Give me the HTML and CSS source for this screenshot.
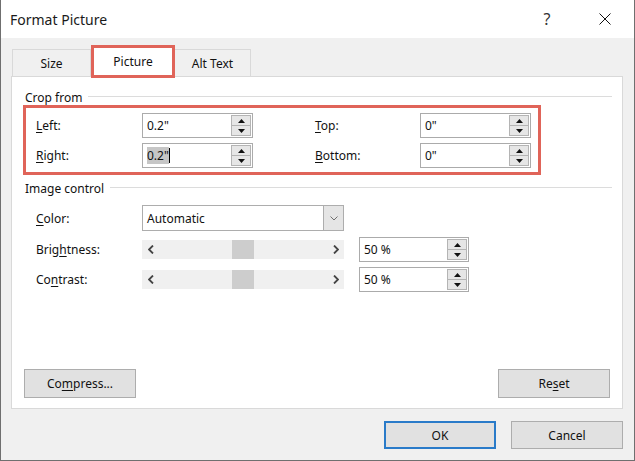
FILE: index.html
```html
<!DOCTYPE html>
<html>
<head>
<meta charset="utf-8">
<title>Format Picture</title>
<link rel="stylesheet" href="styles.css">
</head>
<body>
<div class="window">
  <div class="titlebar">
    <div class="title">Format Picture</div>
    <div class="tb-btn help">?</div>
    <div class="tb-btn close">
      <svg width="12" height="12" viewBox="0 0 12 12"><path d="M0.5 0.5L11.5 11.5M11.5 0.5L0.5 11.5" stroke="#111" stroke-width="1" fill="none"/></svg>
    </div>
  </div>
  <div class="body">
    <div class="tabs">
      <div class="tab tab-size">Size</div>
      <div class="tab tab-active">Picture</div>
      <div class="tab tab-alt">Alt Text</div>
    </div>
    <div class="panel">
      <div class="group-title"><span>Crop from</span><i class="rule"></i></div>
      <div class="crop-box">
        <div class="lbl"><u>L</u>eft:</div>
        <div class="spin"><span class="val">0.2"</span><div class="spin-btns"><div class="sb"><svg width="7" height="4" viewBox="0 0 7 4"><polygon points="0,4 3.5,0 7,4" fill="#111"/></svg></div><div class="sb"><svg width="7" height="4" viewBox="0 0 7 4"><polygon points="0,0 7,0 3.5,4" fill="#111"/></svg></div></div></div>
        <div></div>
        <div class="lbl"><u>T</u>op:</div>
        <div class="spin"><span class="val">0"</span><div class="spin-btns"><div class="sb"><svg width="7" height="4" viewBox="0 0 7 4"><polygon points="0,4 3.5,0 7,4" fill="#111"/></svg></div><div class="sb"><svg width="7" height="4" viewBox="0 0 7 4"><polygon points="0,0 7,0 3.5,4" fill="#111"/></svg></div></div></div>
        <div class="lbl"><u>R</u>ight:</div>
        <div class="spin"><span class="val"><span class="sel">0.2"</span><span class="caret"></span></span><div class="spin-btns"><div class="sb"><svg width="7" height="4" viewBox="0 0 7 4"><polygon points="0,4 3.5,0 7,4" fill="#111"/></svg></div><div class="sb"><svg width="7" height="4" viewBox="0 0 7 4"><polygon points="0,0 7,0 3.5,4" fill="#111"/></svg></div></div></div>
        <div></div>
        <div class="lbl"><u>B</u>ottom:</div>
        <div class="spin"><span class="val">0"</span><div class="spin-btns"><div class="sb"><svg width="7" height="4" viewBox="0 0 7 4"><polygon points="0,4 3.5,0 7,4" fill="#111"/></svg></div><div class="sb"><svg width="7" height="4" viewBox="0 0 7 4"><polygon points="0,0 7,0 3.5,4" fill="#111"/></svg></div></div></div>
      </div>
      <div class="group-title group-image"><span>Image control</span><i class="rule"></i></div>
      <div class="row row-color">
        <div class="lbl lbl-wide"><u>C</u>olor:</div>
        <div class="dropdown"><span class="val">Automatic</span><div class="dd-btn"><svg width="8" height="5" viewBox="0 0 8 5"><polyline points="0.5,0.5 4,4 7.5,0.5" stroke="#707070" stroke-width="1" fill="none"/></svg></div></div>
      </div>
      <div class="row row-bright">
        <div class="lbl lbl-wide">Brig<u>h</u>tness:</div>
        <div class="scroll">
          <div class="sc-arrow"><svg width="6" height="9" viewBox="0 0 6 9"><polyline points="5,0.5 1,4.5 5,8.5" stroke="#444" stroke-width="1.8" fill="none"/></svg></div>
          <div class="sc-track"><div class="sc-thumb"></div></div>
          <div class="sc-arrow"><svg width="6" height="9" viewBox="0 0 6 9"><polyline points="1,0.5 5,4.5 1,8.5" stroke="#444" stroke-width="1.8" fill="none"/></svg></div>
        </div>
        <div class="spin spin-pct"><span class="val">50 %</span><div class="spin-btns"><div class="sb"><svg width="7" height="4" viewBox="0 0 7 4"><polygon points="0,4 3.5,0 7,4" fill="#111"/></svg></div><div class="sb"><svg width="7" height="4" viewBox="0 0 7 4"><polygon points="0,0 7,0 3.5,4" fill="#111"/></svg></div></div></div>
      </div>
      <div class="row row-contrast">
        <div class="lbl lbl-wide">Co<u>n</u>trast:</div>
        <div class="scroll">
          <div class="sc-arrow"><svg width="6" height="9" viewBox="0 0 6 9"><polyline points="5,0.5 1,4.5 5,8.5" stroke="#444" stroke-width="1.8" fill="none"/></svg></div>
          <div class="sc-track"><div class="sc-thumb"></div></div>
          <div class="sc-arrow"><svg width="6" height="9" viewBox="0 0 6 9"><polyline points="1,0.5 5,4.5 1,8.5" stroke="#444" stroke-width="1.8" fill="none"/></svg></div>
        </div>
        <div class="spin spin-pct"><span class="val">50 %</span><div class="spin-btns"><div class="sb"><svg width="7" height="4" viewBox="0 0 7 4"><polygon points="0,4 3.5,0 7,4" fill="#111"/></svg></div><div class="sb"><svg width="7" height="4" viewBox="0 0 7 4"><polygon points="0,0 7,0 3.5,4" fill="#111"/></svg></div></div></div>
      </div>
      <div class="panel-buttons">
        <div class="btn">Co<u>m</u>press...</div>
        <div class="btn">Re<u>s</u>et</div>
      </div>
    </div>
    <div class="footer">
      <div class="btn btn-ok">OK</div>
      <div class="btn">Cancel</div>
    </div>
  </div>
</div>
</body>
</html>
```
FILE: styles.css
```css
* { box-sizing: border-box; margin: 0; padding: 0; }
html, body { width: 635px; height: 461px; overflow: hidden; }
body {
  font-family: "Noto Sans", "Open Sans", sans-serif;
  font-size: 12px;
  color: #111;
  background: #f0f0f0;
}
u { text-decoration: underline; text-underline-offset: 2px; }

.window {
  width: 635px;
  height: 461px;
  display: flex;
  flex-direction: column;
  background: #f0f0f0;
  border-left: 1px solid #6f6f6f;
  border-right: 1px solid #6f6f6f;
  border-bottom: 1px solid #6f6f6f;
}

.titlebar {
  height: 38px;
  flex: none;
  background: #fff;
  display: flex;
  align-items: center;
  padding: 0 6px 0 9px;
}
.title { flex: 1; font-size: 14px; color: #1a1a1a; }
.tb-btn {
  width: 46px;
  height: 38px;
  display: flex;
  align-items: center;
  justify-content: center;
}
.help { margin-right: 12px; font-size: 16px; color: #333; }

.body {
  flex: 1;
  display: flex;
  flex-direction: column;
  padding: 7px 11px 0 10px;
}

.tabs {
  display: flex;
  align-items: flex-end;
  height: 31px;
  padding-left: 1px;
}
.tab {
  height: 27px;
  border: 1px solid #d9d9d9;
  border-bottom: 0;
  background: #f0f0f0;
  display: flex;
  align-items: center;
  justify-content: center;
}
.tab-size { width: 79px; }
.tab-active {
  width: 84px;
  height: 33px;
  border: 3px solid #e06459;
  background: #fff;
  margin-bottom: -2px;
  position: relative;
  z-index: 1;
  padding-bottom: 1px;
}
.tab-alt { width: 76px; border-left: 0; }

.panel {
  height: 333px;
  flex: none;
  background: #fff;
  border: 1px solid #d9d9d9;
  display: flex;
  flex-direction: column;
  padding: 12px 10px 10px 11px;
}

.group-title {
  height: 16px;
  display: flex;
  align-items: center;
  padding-left: 2px;
}
.rule { flex: 1; height: 1px; background: #dcdcdc; margin-left: 6px; margin-top: -1px; }
.group-image { margin-top: 5px; }

.crop-box {
  width: 518px;
  border: 3px solid #e06459;
  padding: 5px 0 4px 10px;
  display: grid;
  grid-template-columns: 106px 111px 62px 105px 111px;
  grid-auto-rows: 25px;
  row-gap: 5px;
  align-items: center;
}

.spin {
  width: 111px;
  height: 25px;
  border: 1px solid #ababab;
  background: #fff;
  display: flex;
  align-items: center;
}
.val { flex: 1; padding-left: 4px; white-space: nowrap; display: flex; align-items: center; }
.sel { background: #c6c6c6; }
.caret { display: inline-block; width: 1px; height: 15px; background: #000; }
.spin-btns {
  align-self: stretch;
  width: 21px;
  padding: 1px 1px 1px 0;
  display: flex;
  flex-direction: column;
}
.sb {
  flex: 1;
  border: 1px solid #b4b4b4;
  background: #e6e6e6;
  display: flex;
  align-items: center;
  justify-content: center;
}
.sb + .sb { border-top: 0; }

.row { display: flex; align-items: center; padding-left: 13px; }
.lbl-wide { width: 106px; flex: none; }
.row-color { height: 26px; margin-top: 9px; }
.row-bright { height: 25px; margin-top: 6px; }
.row-contrast { height: 25px; margin-top: 5px; }

.dropdown {
  width: 202px;
  height: 26px;
  border: 1px solid #adadad;
  display: flex;
  align-items: center;
}
.dd-btn {
  width: 21px;
  align-self: stretch;
  margin: -1px -1px -1px 0;
  border: 1px solid #adadad;
  background: #e5e5e5;
  display: flex;
  align-items: center;
  justify-content: center;
}

.scroll {
  width: 202px;
  height: 19px;
  background: #f0f0f0;
  display: flex;
}
.sc-arrow { width: 17px; display: flex; align-items: center; justify-content: center; }
.sc-track { flex: 1; display: flex; justify-content: center; }
.sc-thumb { width: 22px; background: #cdcdcd; }
.spin-pct { margin-left: 15px; width: 110px; }

.panel-buttons {
  margin-top: auto;
  display: flex;
  justify-content: space-between;
  padding: 0 2px 0 1px;
}
.btn {
  width: 112px;
  height: 29px;
  background: #e1e1e1;
  border: 1px solid #adadad;
  display: flex;
  align-items: center;
  justify-content: center;
}

.footer {
  margin-top: 12px;
  display: flex;
  justify-content: flex-end;
  gap: 15px;
}
.footer .btn { height: 28px; }
.btn-ok { border: 2px solid #2a7bc9; }
```
